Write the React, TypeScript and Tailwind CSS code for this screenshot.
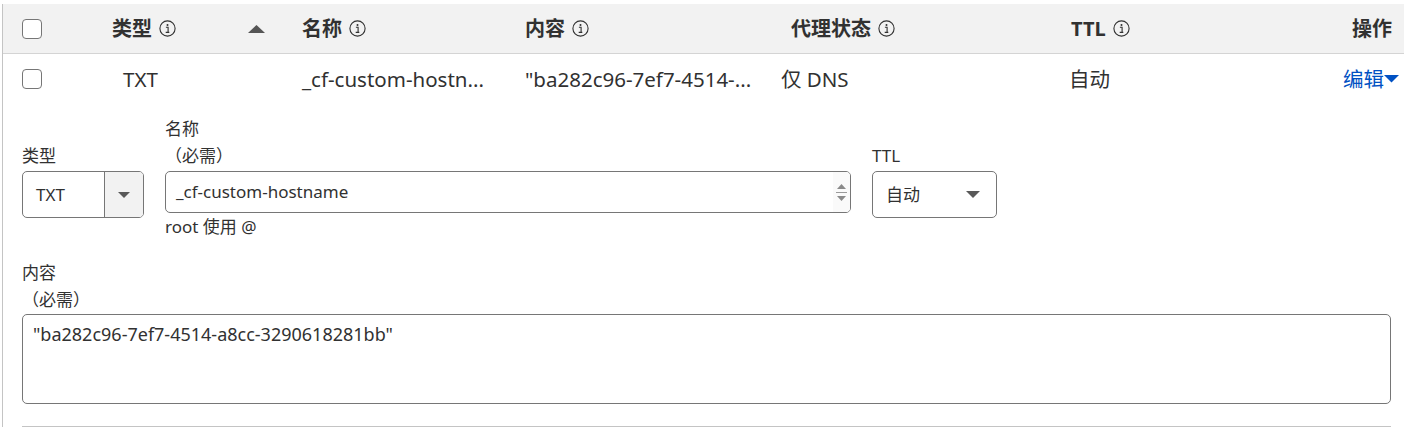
import React from 'react';

function InfoIcon() {
  return (
    <svg width="17" height="17" viewBox="0 0 17 17" className="inline-block">
      <circle cx="8.5" cy="8.5" r="7.6" fill="none" stroke="#313131" strokeWidth="1.1" />
      <circle cx="8.5" cy="4.9" r="1" fill="#313131" />
      <path d="M6.9 7.2h2.2v5.2M6.7 12.4h3.6" fill="none" stroke="#313131" strokeWidth="1.1" />
    </svg>
  );
}

function Checkbox() {
  return <div className="w-5 h-5 rounded-[4px] border border-[#767676] bg-white" />;
}

function Caret({ color = '#595959', w = 12 }: { color?: string; w?: number }) {
  return (
    <svg width={w} height={w / 2} viewBox="0 0 12 6">
      <path d="M0 0h12L6 6z" fill={color} />
    </svg>
  );
}

function HeaderCell({ label, info = true }: { label: string; info?: boolean }) {
  return (
    <div className="flex items-center gap-[7px] font-bold text-[20px]">
      <span>{label}</span>
      {info && <InfoIcon />}
    </div>
  );
}

export default function App() {
  return (
    <div
      className="w-[1404px] h-[427px] bg-white text-[#313131] overflow-hidden"
      style={{ fontFamily: '"Noto Sans", "Noto Sans CJK SC", sans-serif' }}
    >
      <div className="mt-[4px] ml-[2px] border-l border-[#c4c4c4] h-[423px]">
        {/* table header */}
        <div className="flex items-center h-[50px] bg-[#f2f2f2] border-b border-[#d4d4d4]">
          <div className="w-[109px] pl-[19px]">
            <Checkbox />
          </div>
          <div className="w-[190px] flex items-center">
            <HeaderCell label="类型" />
            <div className="ml-[72px]">
              <svg width="17" height="8" viewBox="0 0 17 8">
                <path d="M0 8L8.5 0 17 8z" fill="#555" />
              </svg>
            </div>
          </div>
          <div className="w-[223px]">
            <HeaderCell label="名称" />
          </div>
          <div className="w-[266px]">
            <HeaderCell label="内容" />
          </div>
          <div className="w-[280px]">
            <HeaderCell label="代理状态" />
          </div>
          <div className="flex-1">
            <HeaderCell label="TTL" />
          </div>
          <div className="pr-[12px] font-bold text-[20px]">操作</div>
        </div>

        {/* data row */}
        <div className="flex items-center h-[50px] text-[20.5px]">
          <div className="w-[109px] pl-[19px]">
            <Checkbox />
          </div>
          <div className="w-[190px] pl-[11px]">TXT</div>
          <div className="w-[223px]">_cf-custom-hostn...</div>
          <div className="w-[256px]">"ba282c96-7ef7-4514-...</div>
          <div className="w-[288px]">仅 DNS</div>
          <div className="flex-1">自动</div>
          <div className="pr-[5px] flex items-center text-[#0051c3]">
            <span>编辑</span>
            <Caret color="#0051c3" w={15} />
          </div>
        </div>

        {/* edit form */}
        <div className="pl-[19px] pr-[13px] text-[17px] mt-[11px]">
          <div className="flex items-start gap-[21px]">
            <div className="w-[122px] pt-[27px]">
              <div className="leading-[27px] h-[27px]">类型</div>
              <div className="mt-[2px] flex h-[47px] rounded-[5px] border border-[#767676] overflow-hidden">
                <div className="flex-1 flex items-center pl-[13px]">TXT</div>
                <div className="w-[39px] border-l border-[#767676] bg-[#f2f2f2] flex items-center justify-center">
                  <Caret color="#595959" w={12} />
                </div>
              </div>
            </div>
            <div className="w-[686px]">
              <div className="leading-[27px]">名称</div>
              <div className="leading-[27px]">（必需）</div>
              <div className="mt-[2px] flex h-[42px] rounded-[5px] border border-[#767676] overflow-hidden">
                <div className="flex-1 flex items-center pl-[10px]">_cf-custom-hostname</div>
                <div className="w-[17px] bg-[#fafafa] flex flex-col items-center justify-center gap-[3px]">
                  <svg width="9" height="5" viewBox="0 0 9 5"><path d="M0 5L4.5 0 9 5z" fill="#8a8a8a" /></svg>
                  <div className="w-[11px] h-px bg-[#9a9a9a]" />
                  <svg width="9" height="5" viewBox="0 0 9 5"><path d="M0 0h9L4.5 5z" fill="#8a8a8a" /></svg>
                </div>
              </div>
              <div className="leading-[27px]">root 使用 @</div>
            </div>
            <div className="w-[125px] pt-[27px]">
              <div className="leading-[27px] h-[27px]">TTL</div>
              <div className="mt-[2px] flex items-center justify-between h-[47px] rounded-[5px] border border-[#767676] pl-[13px] pr-[16px]">
                <span>自动</span>
                <Caret color="#595959" w={14} />
              </div>
            </div>
          </div>

          <div className="mt-[19px]">
            <div className="leading-[27px]">内容</div>
            <div className="leading-[27px]">（必需）</div>
            <div className="mt-[1px] h-[90px] rounded-[5px] border border-[#767676] px-[10px] pt-[6px] text-[18px]">
              "ba282c96-7ef7-4514-a8cc-3290618281bb"
            </div>
          </div>

          <div className="mt-[22px] border-t border-[#c4c4c4]" />
        </div>
      </div>
    </div>
  );
}
